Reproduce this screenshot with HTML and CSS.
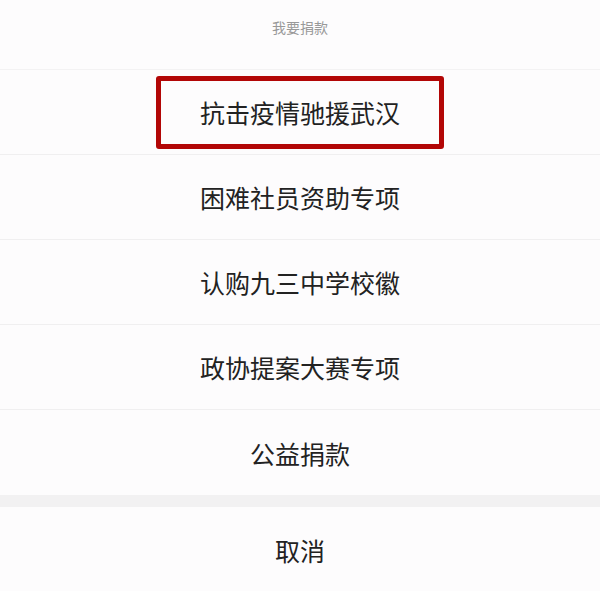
FILE: index.html
```html
<!DOCTYPE html>
<html lang="zh-CN">
<head>
    <meta charset="UTF-8">
    <meta name="viewport" content="width=device-width, initial-scale=1.0">
    <title>我要捐款</title>
    <link rel="stylesheet" href="styles.css">
</head>
<body>
    <div class="sheet">
        <div class="sheet-title">我要捐款</div>

        <div class="sheet-list">
            <div class="sheet-item"><span class="highlight">抗击疫情驰援武汉</span></div>
            <div class="sheet-item">困难社员资助专项</div>
            <div class="sheet-item">认购九三中学校徽</div>
            <div class="sheet-item">政协提案大赛专项</div>
            <div class="sheet-item">公益捐款</div>
        </div>

        <div class="sheet-gap"></div>

        <div class="sheet-item cancel">取消</div>
    </div>
</body>
</html>
```

FILE: styles.css
```css
* {
    margin: 0;
    padding: 0;
    box-sizing: border-box;
}

body {
    font-family: "Noto Sans CJK SC", "Noto Sans", sans-serif;
    background: #fdfcfd;
    color: #222;
}

.sheet {
    width: 600px;
}

.sheet-title {
    height: 70px;
    padding-top: 17px;
    text-align: center;
    font-size: 14px;
    line-height: 20px;
    color: #999;
    border-bottom: 1px solid #f3f2f3;
}

.sheet-item {
    height: 85px;
    display: flex;
    align-items: center;
    justify-content: center;
    font-size: 25px;
    border-bottom: 1px solid #f0eff0;
}

.sheet-list .sheet-item:last-child {
    border-bottom: none;
}

.highlight {
    display: inline-block;
    padding: 17px 39px;
    line-height: 29px;
    border: 5px solid #b20606;
    border-radius: 3px;
}

.sheet-gap {
    height: 12px;
    background: #f2f1f2;
}

.cancel {
    border-bottom: none;
}
```
